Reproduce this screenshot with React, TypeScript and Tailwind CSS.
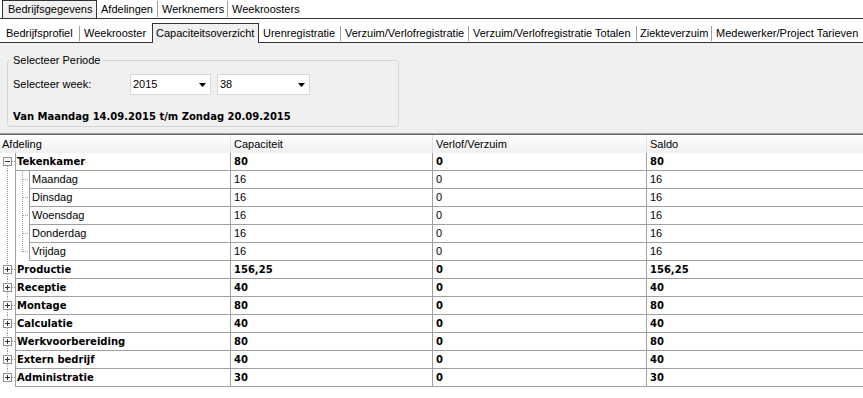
import React from "react";

type Node = {
  name: string;
  cap: string;
  verlof: string;
  saldo: string;
  children?: Node[];
};

const days = ["Maandag", "Dinsdag", "Woensdag", "Donderdag", "Vrijdag"];

const data: Node[] = [
  {
    name: "Tekenkamer",
    cap: "80",
    verlof: "0",
    saldo: "80",
    children: days.map((d) => ({ name: d, cap: "16", verlof: "0", saldo: "16" })),
  },
  { name: "Productie", cap: "156,25", verlof: "0", saldo: "156,25" },
  { name: "Receptie", cap: "40", verlof: "0", saldo: "40" },
  { name: "Montage", cap: "80", verlof: "0", saldo: "80" },
  { name: "Calculatie", cap: "40", verlof: "0", saldo: "40" },
  { name: "Werkvoorbereiding", cap: "80", verlof: "0", saldo: "80" },
  { name: "Extern bedrijf", cap: "40", verlof: "0", saldo: "40" },
  { name: "Administratie", cap: "30", verlof: "0", saldo: "30" },
];

const subTabs = [
  { label: "Bedrijfsprofiel", w: "w-[80px]", pl: "pl-[6px]", sep: true },
  { label: "Weekrooster", w: "w-[72px]", pl: "pl-[4px]", sep: false },
  { label: "Capaciteitsoverzicht", active: true },
  { label: "Urenregistratie", w: "w-[82px]", pl: "pl-[4px]", sep: true },
  { label: "Verzuim/Verlofregistratie", w: "w-[128px]", pl: "pl-[4px]", sep: true },
  { label: "Verzuim/Verlofregistratie Totalen", w: "w-[168px]", pl: "pl-[4px]", sep: true },
  { label: "Ziekteverzuim", w: "w-[75px]", pl: "pl-[3px]", sep: true },
  { label: "Medewerker/Project Tarieven", w: "flex-1", pl: "pl-[4px]", sep: false },
];

const dot = { stroke: "#a0a0a0", strokeDasharray: "1 1" };

function RootGlyph(props: { first: boolean; last: boolean; expanded: boolean }) {
  return (
    <svg width={15} height={18} className="shrink-0" shapeRendering="crispEdges">
      {!props.first && <line x1={7.5} y1={0} x2={7.5} y2={4} {...dot} />}
      {!props.last && <line x1={7.5} y1={13} x2={7.5} y2={18} {...dot} />}
      <line x1={12} y1={8.5} x2={15} y2={8.5} {...dot} />
      <rect x={3.5} y={4.5} width={8} height={8} fill="#fff" stroke="#919191" />
      <line x1={5} y1={8.5} x2={10} y2={8.5} stroke="#333" />
      {!props.expanded && <line x1={7.5} y1={6} x2={7.5} y2={11} stroke="#333" />}
    </svg>
  );
}

function ChildGlyph(props: { last: boolean }) {
  return (
    <svg width={29} height={18} className="shrink-0" shapeRendering="crispEdges">
      <line x1={7.5} y1={0} x2={7.5} y2={18} {...dot} />
      <line x1={15.5} y1={0} x2={15.5} y2={18} stroke="#a0a0a0" />
      <line x1={22.5} y1={0} x2={22.5} y2={props.last ? 9 : 18} {...dot} />
      <line x1={23} y1={8.5} x2={29} y2={8.5} {...dot} />
    </svg>
  );
}

function Select(props: { value: string; width: string }) {
  return (
    <div
      className={`flex h-[21px] ${props.width} items-center justify-between border border-[#d9d9d9] bg-white pr-[4px] pl-[2px]`}
    >
      <span>{props.value}</span>
      <svg width={7} height={4}>
        <polygon points="0,0 7,0 3.5,4" fill="#000" />
      </svg>
    </div>
  );
}

function DataRow(props: { node: Node; glyph: React.ReactNode; bold: boolean }) {
  const text = props.bold
    ? "font-['DejaVu_Sans',sans-serif] text-[10px] font-bold"
    : "";
  const cell = "flex items-center border-b border-l border-[#a0a0a0] pl-[3px]";
  return (
    <div className="grid h-[18px] grid-cols-[230px_202px_214px_1fr]">
      <div className="flex">
        {props.glyph}
        <div
          className={`flex flex-1 items-center border-b border-l border-[#a0a0a0] ${props.bold ? "pl-[1px]" : "pl-[2px]"} ${text}`}
        >
          {props.node.name}
        </div>
      </div>
      <div className={`${cell} ${text}`}>{props.node.cap}</div>
      <div className={`${cell} ${text}`}>{props.node.verlof}</div>
      <div className={`${cell} ${text}`}>{props.node.saldo}</div>
    </div>
  );
}

export default function App() {
  return (
    <div className="h-[398px] w-[863px] overflow-hidden bg-white font-['Liberation_Sans',Arial,sans-serif] text-[11px] leading-[13px] text-black">
      {/* top tabs */}
      <div className="flex h-[19px] border-b border-[#333]">
        <div className="ml-[2px] flex w-[95px] items-center border-x border-t border-[#333] bg-[#f0f0f0] pl-[5px]">
          Bedrijfsgegevens
        </div>
        <div className="flex w-[60px] items-center pl-[4px]">Afdelingen</div>
        <span className="my-[1px] w-px bg-[#a0a0a0]" />
        <div className="flex w-[69px] items-center pl-[4px]">Werknemers</div>
        <span className="my-[1px] w-px bg-[#a0a0a0]" />
        <div className="flex items-center pl-[4px]">Weekroosters</div>
      </div>

      {/* sub tabs */}
      <div className="flex h-[24px]">
        {subTabs.map((t) =>
          t.active ? (
            <div
              key={t.label}
              className="mt-[4px] flex w-[107px] shrink-0 items-center whitespace-nowrap border-x border-t border-[#333] bg-[#f0f0f0] pl-[3px]"
            >
              {t.label}
            </div>
          ) : (
            <div
              key={t.label}
              className={`flex ${t.w} shrink-0 items-center border-b border-[#333] pt-[5px]`}
            >
              <span className={`flex-1 overflow-hidden whitespace-nowrap ${t.pl}`}>{t.label}</span>
              {t.sep && <span className="h-[15px] w-px bg-[#a0a0a0]" />}
            </div>
          ),
        )}
      </div>

      {/* period panel */}
      <div className="h-[91px] border-b border-[#a0a0a0] bg-[#f0f0f0] pt-[11px] pl-[7px]">
        <fieldset className="h-[73px] w-[392px] rounded-[3px] border border-[#d5d5d5]">
          <legend className="ml-[3px] px-[2px]">Selecteer Periode</legend>
          <div className="mt-[7px] flex items-center pl-[5px]">
            <span className="w-[117px]">Selecteer week:</span>
            <Select value="2015" width="w-[81px]" />
            <div className="ml-[6px]">
              <Select value="38" width="w-[93px]" />
            </div>
          </div>
          <div className="mt-[15px] pl-[5px] font-['DejaVu_Sans',sans-serif] text-[10px] font-bold">
            Van Maandag 14.09.2015 t/m Zondag 20.09.2015
          </div>
        </fieldset>
      </div>

      {/* tree list */}
      <div className="grid h-[19px] grid-cols-[230px_202px_214px_1fr] border-t border-[#696969] bg-linear-to-b from-white to-[#f0f0f0]">
        <div className="flex items-center pl-[2px]">Afdeling</div>
        <div className="flex items-center border-l border-[#e0e0e0] pl-[3px]">Capaciteit</div>
        <div className="flex items-center border-l border-[#e0e0e0] pl-[3px]">Verlof/Verzuim</div>
        <div className="flex items-center border-l border-[#e0e0e0] pl-[3px]">Saldo</div>
      </div>
      {data.map((node, i) => {
        const expanded = Boolean(node.children);
        return (
          <React.Fragment key={node.name}>
            <DataRow
              node={node}
              bold
              glyph={
                <RootGlyph first={i === 0} last={i === data.length - 1} expanded={expanded} />
              }
            />
            {node.children?.map((c, j) => (
              <DataRow
                key={c.name}
                node={c}
                bold={false}
                glyph={<ChildGlyph last={j === node.children!.length - 1} />}
              />
            ))}
          </React.Fragment>
        );
      })}
    </div>
  );
}
